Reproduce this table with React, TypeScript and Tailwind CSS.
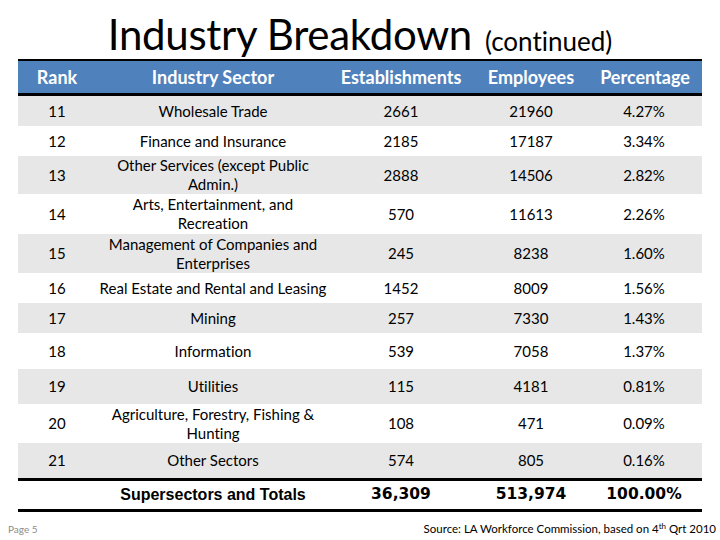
type Row = {
  rank: string;
  sector: string[];
  est: string;
  emp: string;
  pct: string;
  h: string;
  gray: boolean;
};

const rows: Row[] = [
  { rank: "11", sector: ["Wholesale Trade"], est: "2661", emp: "21960", pct: "4.27%", h: "h-[30px]", gray: true },
  { rank: "12", sector: ["Finance and Insurance"], est: "2185", emp: "17187", pct: "3.34%", h: "h-[30px]", gray: false },
  { rank: "13", sector: ["Other Services (except Public", "Admin.)"], est: "2888", emp: "14506", pct: "2.82%", h: "h-[38px]", gray: true },
  { rank: "14", sector: ["Arts, Entertainment, and", "Recreation"], est: "570", emp: "11613", pct: "2.26%", h: "h-[40px]", gray: false },
  { rank: "15", sector: ["Management of Companies and", "Enterprises"], est: "245", emp: "8238", pct: "1.60%", h: "h-[39px]", gray: true },
  { rank: "16", sector: ["Real Estate and Rental and Leasing"], est: "1452", emp: "8009", pct: "1.56%", h: "h-[30px]", gray: false },
  { rank: "17", sector: ["Mining"], est: "257", emp: "7330", pct: "1.43%", h: "h-[30px]", gray: true },
  { rank: "18", sector: ["Information"], est: "539", emp: "7058", pct: "1.37%", h: "h-[36px]", gray: false },
  { rank: "19", sector: ["Utilities"], est: "115", emp: "4181", pct: "0.81%", h: "h-[35px]", gray: true },
  { rank: "20", sector: ["Agriculture, Forestry, Fishing &", "Hunting"], est: "108", emp: "471", pct: "0.09%", h: "h-[39px]", gray: false },
  { rank: "21", sector: ["Other Sectors"], est: "574", emp: "805", pct: "0.16%", h: "h-[35px]", gray: true },
];

const cols = "grid grid-cols-[78px_234px_142px_118px_112px]";

export default function App() {
  return (
    <div className="w-[720px] h-[540px] bg-white overflow-hidden font-['Lato',sans-serif] text-black [font-variant-ligatures:none]">
      {/* title */}
      <div className="h-[59px] flex items-end justify-center pb-[4px] gap-[13px]">
        <span className="text-[42px] leading-none tracking-[-0.3px]">Industry Breakdown</span>
        <span className="text-[26px] leading-none pb-[1px]">(continued)</span>
      </div>

      <div className="ml-[18px] w-[684px]">
        <div className={`${cols} h-[37px] bg-[#4f81bd] border-t-2 border-b-[3px] border-black text-white font-bold text-[18px] items-center`}>
          <div className="text-center">Rank</div>
          <div className="text-center">Industry Sector</div>
          <div className="text-center">Establishments</div>
          <div className="text-center">Employees</div>
          <div className="text-center pr-[2px]">Percentage</div>
        </div>

        {rows.map((r) => (
          <div
            key={r.rank}
            className={`${cols} ${r.h} items-center text-[15px] ${r.gray ? "bg-[#e7e7e7]" : "bg-white"}`}
          >
            <div className="text-center">{r.rank}</div>
            <div className="text-center leading-[19px]">
              {r.sector.map((s) => (
                <div key={s}>{s}</div>
              ))}
            </div>
            <div className="text-center">{r.est}</div>
            <div className="text-center">{r.emp}</div>
            <div className="text-center pr-[4px]">{r.pct}</div>
          </div>
        ))}

        <div className={`${cols} h-[34px] border-t-[3px] border-b-[3px] border-black items-center font-bold`}>
          <div />
          <div className="text-center text-[16px] font-['Liberation_Sans',sans-serif]">Supersectors and Totals</div>
          <div className="text-center text-[15.5px] font-['DejaVu_Sans',sans-serif]">36,309</div>
          <div className="text-center text-[15.5px] font-['DejaVu_Sans',sans-serif]">513,974</div>
          <div className="text-center text-[15.5px] font-['DejaVu_Sans',sans-serif] pr-[4px]">100.00%</div>
        </div>
      </div>

      <div className="flex justify-between items-end px-[4px] h-[26px]">
        <span className="text-[10px] text-[#8c8c8c] pl-[4px] self-start pt-[10px]">Page 5</span>
        <span className="text-[11.5px] pb-[1px]">
          Source: LA Workforce Commission, based on 4<sup className="text-[8px]">th</sup> Qrt 2010
        </span>
      </div>
    </div>
  );
}
